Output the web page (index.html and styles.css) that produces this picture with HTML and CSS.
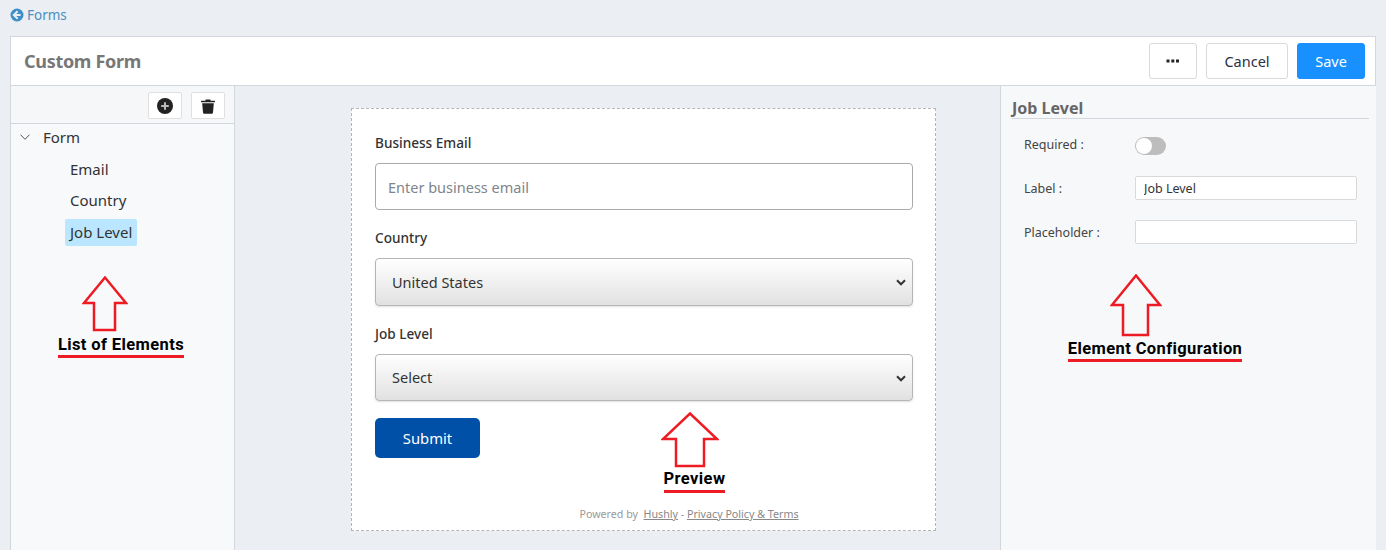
FILE: index.html
```html
<!DOCTYPE html>
<html lang="en">
<head>
<meta charset="utf-8">
<title>Custom Form</title>
<link rel="stylesheet" href="styles.css">
</head>
<body>
<nav class="crumb">
  <a href="#" class="crumb-link">
    <svg class="crumb-icon" viewBox="0 0 14 14" width="14" height="14"><circle cx="7" cy="7" r="6.5" fill="#3d8fc9"/><path d="M7.600 3.200 3.800 7l3.800 3.800M4 7h6.600" fill="none" stroke="#ebeef3" stroke-width="2"/></svg>Forms
  </a>
</nav>
<main class="card">
  <header class="card-head">
    <h1 class="title">Custom Form</h1>
    <div class="actions">
      <button class="btn btn-more" type="button" aria-label="More"><svg viewBox="0 0 14 4" width="14" height="4"><rect x="0.500" y="0.500" width="3" height="3" fill="#222"/><rect x="5.300" y="0.500" width="3" height="3" fill="#222"/><rect x="10" y="0.500" width="3" height="3" fill="#222"/></svg></button>
      <button class="btn btn-cancel" type="button">Cancel</button>
      <button class="btn btn-save" type="button">Save</button>
    </div>
  </header>
  <div class="columns">
    <aside class="tree-panel">
      <div class="toolbar">
        <button class="tool" type="button" aria-label="Add"><svg viewBox="0 0 16 16" width="16" height="16"><circle cx="8" cy="8" r="8" fill="#222"/><path d="M8 4.200v7.600M4.200 8h7.600" stroke="#bbb" stroke-width="2"/></svg></button>
        <button class="tool" type="button" aria-label="Delete"><svg viewBox="0 0 14 16" width="14" height="16"><path d="M4.500 1.500h5v1.200H14v1.600H0V2.700h4.500z" fill="#222"/><path d="M1.200 5.200h11.600l-.8 9.300a1.300 1.300 0 0 1-1.300 1.200H3.300A1.300 1.300 0 0 1 2 14.500z" fill="#222"/></svg></button>
      </div>
      <ul class="tree">
        <li class="tree-root"><svg class="caret" viewBox="0 0 10 6" width="10" height="6"><path d="M.5.700 5 5.300 9.500.700" fill="none" stroke="#555" stroke-width="1"/></svg><span>Form</span></li>
        <li class="tree-leaf"><span class="leaf">Email</span></li>
        <li class="tree-leaf"><span class="leaf">Country</span></li>
        <li class="tree-leaf"><span class="leaf leaf-on">Job Level</span></li>
      </ul>
    </aside>
    <section class="stage">
      <form class="preview">
        <label class="f-label">Business Email</label>
        <input class="f-input" type="text" placeholder="Enter business email">
        <label class="f-label">Country</label>
        <div class="select-wrap">
          <select class="f-select"><option>United States</option></select>
          <svg class="chev" viewBox="0 0 10 7" width="10" height="7"><path d="M1 1.300 5 5.300 9 1.300" fill="none" stroke="#333" stroke-width="2"/></svg>
        </div>
        <label class="f-label">Job Level</label>
        <div class="select-wrap">
          <select class="f-select"><option>Select</option></select>
          <svg class="chev" viewBox="0 0 10 7" width="10" height="7"><path d="M1 1.300 5 5.300 9 1.300" fill="none" stroke="#333" stroke-width="2"/></svg>
        </div>
        <button class="submit" type="button">Submit</button>
        <p class="powered">Powered by &nbsp;<a href="#">Hushly</a> - <a href="#">Privacy Policy &amp; Terms</a></p>
      </form>
    </section>
    <aside class="config">
      <h2 class="config-title">Job Level</h2>
      <div class="config-rows">
        <div class="row"><span class="row-label">Required</span><span class="toggle"><span class="knob"></span></span></div>
        <div class="row"><span class="row-label">Label</span><input class="row-input" type="text" value="Job Level"></div>
        <div class="row"><span class="row-label">Placeholder</span><input class="row-input" type="text"></div>
      </div>
    </aside>
  </div>
</main>

<div class="note note-list">
  <svg class="arrow" viewBox="0 0 46 56" width="46" height="56"><path d="M23 1.500 44 27H33v27H12V27H2z" fill="none" stroke="#ed1c24" stroke-width="2.500"/></svg>
  <span class="note-text">List of Elements</span>
</div>
<div class="note note-preview">
  <svg class="arrow" viewBox="0 0 58 56" width="58" height="56"><path d="M29 1.500 56 27H43v27H15V27H2z" fill="none" stroke="#ed1c24" stroke-width="2.500"/></svg>
  <span class="note-text">Preview</span>
</div>
<div class="note note-config">
  <svg class="arrow" viewBox="0 0 52 64" width="52" height="64"><path d="M26 1.500 50 31H38v30H13V31H2z" fill="none" stroke="#ed1c24" stroke-width="2.500"/></svg>
  <span class="note-text">Element Configuration</span>
</div>
</body>
</html>
```
FILE: styles.css
```css
* { box-sizing: border-box; }
html, body { margin: 0; height: 550px; overflow: hidden; }
body {
  background: #ebeef3;
  font-family: "Noto Sans", "Open Sans", sans-serif;
  color: #333;
  position: relative;
}
.crumb { height: 36px; padding: 5px 0 0 10px; }
.crumb-link { display: inline-flex; align-items: center; gap: 3px; font-size: 13.500px; line-height: 18px; color: #4a90c2; text-decoration: none; }
.card { margin: 0 10px; border: 1px solid #d3d6dc; border-bottom: 0; height: 514px; display: flex; flex-direction: column; background: #fff; }
.card-head { height: 49px; flex: none; display: flex; justify-content: space-between; align-items: flex-start; padding: 6px 10px 0 13px; border-bottom: 1px solid #d3d6dc; }
.title { margin: 6px 0 0; font-size: 18px; line-height: 25px; font-weight: 700; color: #777; letter-spacing: -0.3px; }
.actions { display: flex; gap: 9px; }
.btn { height: 36px; border: 1px solid #d9d9d9; background: #fff; border-radius: 3px; font: 14.500px/1 "Noto Sans", sans-serif; color: #2a3045; padding: 0; display: flex; align-items: center; justify-content: center; }
.btn-more { width: 48px; }
.btn-cancel { width: 82px; }
.btn-save { width: 68px; background: #1890ff; border-color: #1890ff; color: #fff; }
.columns { flex: 1; display: flex; min-height: 0; }
.tree-panel { width: 224px; flex: none; background: #f8f9fb; border-right: 1px solid #d3d6dc; }
.toolbar { height: 38px; display: flex; justify-content: flex-end; gap: 9px; padding: 6px 9px 0 0; background: #f6f7f9; border-bottom: 1px solid #d3d6dc; }
.tool { width: 34px; height: 27px; background: #fff; border: 1px solid #e0e0e0; border-radius: 2px; padding: 0; display: flex; align-items: center; justify-content: center; }
.tree { list-style: none; margin: 0; padding: 0; font-size: 15px; color: #333; }
.tree-root { height: 26px; display: flex; align-items: center; padding-left: 9px; gap: 13px; margin-bottom: 3.500px; }
.tree-leaf { height: 31.500px; display: flex; align-items: center; padding-left: 54px; }
.leaf { padding: 0 5px; height: 27px; line-height: 27px; border-radius: 2px; }
.leaf-on { background: #bae7ff; }
.stage { width: 765px; flex: none; background: #ebeef3; padding: 22px 0 0 116px; }
.preview { width: 585px; height: 423px; background: #fff; border: 1px dashed #b5b5b5; padding: 24px 22px 0 23px; display: flex; flex-direction: column; }
.f-label { font-size: 13.600px; line-height: 20px; font-weight: 500; color: #333; margin-bottom: 10px; }
.f-input { height: 47px; flex: none; border: 1px solid #aaa; border-radius: 4px; padding: 0 12px; font: 14.500px "Noto Sans", sans-serif; margin-bottom: 18px; background: #fff; }
.f-input::placeholder { color: #80858b; opacity: 1; }
.select-wrap { position: relative; margin-bottom: 18px; }
.f-select { width: 100%; height: 47.500px; display: block; appearance: none; border: 1px solid #b5b5b5; border-radius: 4px; padding: 0 16px; font: 14.500px "Noto Sans", sans-serif; color: #333; background: linear-gradient(#fff, #e1e1e1); box-shadow: 0 1px 2px rgba(0,0,0,.12); }
.chev { position: absolute; right: 7px; top: 21px; pointer-events: none; }
.submit { width: 105px; height: 40px; flex: none; background: #0050a8; color: #fff; border: 0; border-radius: 5px; font: 14.800px "Noto Sans", sans-serif; padding: 0 0 1px; margin-top: -1px; }
.powered { margin: 48px 0 0; text-align: center; font-size: 10.700px; line-height: 16px; color: #999; padding-left: 90px; }
.powered a { color: #888; }
.config { flex: 1; background: #f7f8fa; border-left: 1px solid #d3d6dc; padding: 12px 7px 0 11px; }
.config-title { margin: 0; font-size: 16px; line-height: 20px; font-weight: 700; color: #666; border-bottom: 1px solid #d3d6dc; }
.config-rows { padding: 13px 12px 0 12px; display: flex; flex-direction: column; gap: 20px; }
.row { display: flex; align-items: center; height: 24px; font-size: 12.500px; color: #444; }
.row-label { width: 111px; flex: none; }
.row-label::after { content: " :"; }
.row-input { width: 222px; height: 24px; border: 1px solid #d9d9d9; border-radius: 2px; background: #fff; padding: 0 8px; font: 12.500px "Noto Sans", sans-serif; color: #333; }
.toggle { width: 31px; height: 18px; margin-top: 4px; border-radius: 9px; background: #bdbdbd; position: relative; display: block; }
.knob { position: absolute; left: 1px; top: 1px; width: 16px; height: 16px; border-radius: 50%; background: #fff; }
.note { position: absolute; display: flex; flex-direction: column; align-items: center; }
.arrow { display: block; }
.note-text { font-family: "Roboto", sans-serif; font-weight: 700; font-size: 16.500px; line-height: 20px; letter-spacing: .4px; color: #000; border-bottom: 3px solid #ed1c24; white-space: nowrap; }
.note-list { left: 58px; top: 276px; width: 126px; }
.note-list .arrow { margin: 0 0 3px -32px; }
.note-preview { left: 663px; top: 412px; width: 63px; }
.note-preview .arrow { margin: 0 0 1px -10px; }
.note-preview .note-text { padding-bottom: 1px; }
.note-config { left: 1068px; top: 274px; width: 174px; }
.note-config .arrow { margin: 0 0 1px -38px; }
```
